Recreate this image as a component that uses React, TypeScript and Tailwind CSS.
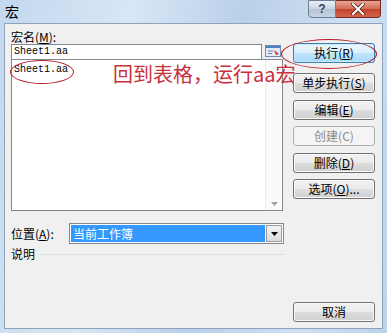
import React from 'react';

const cjk = { fontFamily: '"Noto Sans CJK SC", "Liberation Sans", sans-serif' };
const mono = { fontFamily: '"Liberation Mono", "Noto Sans CJK SC", monospace' };

// Win7 style push button
const Btn = ({ children, variant = 'normal' }: { children: React.ReactNode; variant?: 'normal' | 'default' | 'disabled' }) => {
  const look =
    variant === 'default'
      ? 'border-[#3c7fb1] bg-[linear-gradient(#eaf6fd_0%,#d9f0fc_50%,#bee6fd_51%,#a7d9f5_100%)] text-black shadow-[inset_0_0_0_1px_#cde8f8]'
      : variant === 'disabled'
        ? 'border-[#adb2b5] bg-[#f4f4f4] text-[#8c8c8c]'
        : 'border-[#707070] bg-[linear-gradient(#f2f2f2_0%,#ebebeb_50%,#dddddd_51%,#cfcfcf_100%)] text-black shadow-[inset_0_0_0_1px_#fbfbfb]';
  return (
    <div className={`flex h-[20px] w-[82px] items-center justify-center rounded-[3px] border text-[12px] leading-none ${look}`} style={cjk}>
      {children}
    </div>
  );
};

export default function App() {
  return (
    <div className="relative h-[333px] w-[387px] overflow-hidden bg-[linear-gradient(100deg,#c3d8ee_0%,#d8e6f5_30%,#b9d0ea_55%,#cfe0f2_80%,#bcd3ec_100%)]">
      {/* title bar */}
      <div className="flex h-[23px] items-start justify-between">
        <div className="pl-[5px] pt-[3px] text-[14px] leading-[16px] text-black" style={cjk}>宏</div>
        <div className="flex pr-[6px]">
          <div className="flex h-[18px] w-[28px] items-center justify-center rounded-bl-[4px] border border-[#6d7d94] bg-[linear-gradient(#e9eef5,#c9d4e2_50%,#b4c3d6_51%,#c5d3e4)] text-[12px] font-bold leading-none text-[#37465c]" style={{ fontFamily: '"Liberation Sans", sans-serif' }}>?</div>
          <div className="flex h-[18px] w-[45px] items-center justify-center rounded-br-[4px] border border-l-0 border-[#7a2a22] bg-[linear-gradient(#e8a493,#d26b55_50%,#c2432c_51%,#d4634a)]">
            <svg width="14" height="12" viewBox="0 0 14 12">
              <path d="M2 1 L12 11 M12 1 L2 11" stroke="#4d2620" strokeWidth="3.6" strokeLinecap="square" />
              <path d="M2 1 L12 11 M12 1 L2 11" stroke="#ffffff" strokeWidth="2" strokeLinecap="square" />
            </svg>
          </div>
        </div>
      </div>

      {/* client area */}
      <div className="mx-[4px] flex h-[306px] flex-col border border-[#8ea3bb] bg-[#f0f0f0] px-[6px] pt-[6px]">
        <div className="flex gap-[10px]">
          {/* left column */}
          <div className="flex w-[272px] flex-col">
            <div className="h-[14px] text-[12px] leading-[14px] text-black" style={cjk}>
              宏名(<u>M</u>):
            </div>
            <div className="flex h-[15px]">
              <div className="flex w-[251px] items-center border border-b-0 border-[#828790] bg-white pl-[2px] text-[10px] leading-none" style={mono}>
                Sheet1.aa
              </div>
              <div className="flex w-[21px] items-start justify-center pt-[1px]">
                <svg width="16" height="12" viewBox="0 0 16 12">
                  <rect x="0.5" y="0.5" width="15" height="11" fill="#dfe8f3" stroke="#6e8cb0" />
                  <rect x="1" y="1" width="14" height="2" fill="#4f7fc0" />
                  <path d="M3 6h5M3 8.5h4" stroke="#6e8cb0" />
                  <path d="M9 5 L14 9 L11 10 Z" fill="#d03a2a" />
                </svg>
              </div>
            </div>
            <div className="flex h-[152px] border border-[#828790] bg-white">
              <div className="flex-1 pl-[2px] pt-[5px] text-[10px] leading-none" style={mono}>
                Sheet1.aa
              </div>
              <div className="flex w-[17px] flex-col justify-end border-l border-[#ececec] bg-[#fafafa] pb-[4px]">
                <div className="flex justify-center">
                  <svg width="7" height="4" viewBox="0 0 7 4"><path d="M0 0h7L3.5 4z" fill="#a0a0a0" /></svg>
                </div>
              </div>
            </div>
          </div>

          {/* buttons */}
          <div className="flex flex-col pt-[13px]">
            <Btn variant="default">执行(<u>R</u>)</Btn>
            <div className="mt-[10px] flex flex-col gap-[6.5px]">
              <Btn>单步执行(<u>S</u>)</Btn>
              <Btn>编辑(<u>E</u>)</Btn>
              <Btn variant="disabled">创建(C)</Btn>
              <Btn>删除(<u>D</u>)</Btn>
              <Btn>选项(<u>O</u>)...</Btn>
            </div>
          </div>
        </div>

        {/* location */}
        <div className="mt-[12px] flex h-[21px] items-center">
          <div className="w-[58px] text-[12px] leading-none text-black" style={cjk}>
            位置(<u>A</u>):
          </div>
          <div className="flex h-[21px] w-[215px] border border-[#828790] bg-white p-[1px]">
            <div className="flex flex-1 items-center bg-[#3399ff] pl-[2px] text-[12px] leading-none text-white" style={cjk}>
              当前工作簿
            </div>
            <div className="ml-[1px] flex w-[16px] items-center justify-center border border-[#9a9a9a] bg-[linear-gradient(#f4f4f4,#dcdcdc)]">
              <svg width="7" height="4" viewBox="0 0 7 4"><path d="M0 0h7L3.5 4z" fill="#000" /></svg>
            </div>
          </div>
        </div>

        {/* description */}
        <div className="mt-[3px] flex items-center gap-[6px]">
          <div className="text-[12px] leading-[14px] text-black" style={cjk}>说明</div>
          <div className="h-px w-[244px] bg-[#d5dfe5]" />
        </div>

        <div className="flex flex-1 items-start justify-end pt-[41px] pr-[1px]">
          <Btn>取消</Btn>
        </div>
      </div>

      {/* red annotations */}
      <div className="absolute left-[10px] top-[60px] h-[24px] w-[64px] rounded-[50%] border border-[#b51d2a]" />
      <div className="absolute left-[281px] top-[39px] h-[30px] w-[96px] rounded-[50%] border border-[#b51d2a]" />
      <div className="absolute left-[113px] top-[62px] text-[20px] leading-[24px] text-[#c8303c]" style={cjk}>
        回到表格，运行aa宏
      </div>
    </div>
  );
}
